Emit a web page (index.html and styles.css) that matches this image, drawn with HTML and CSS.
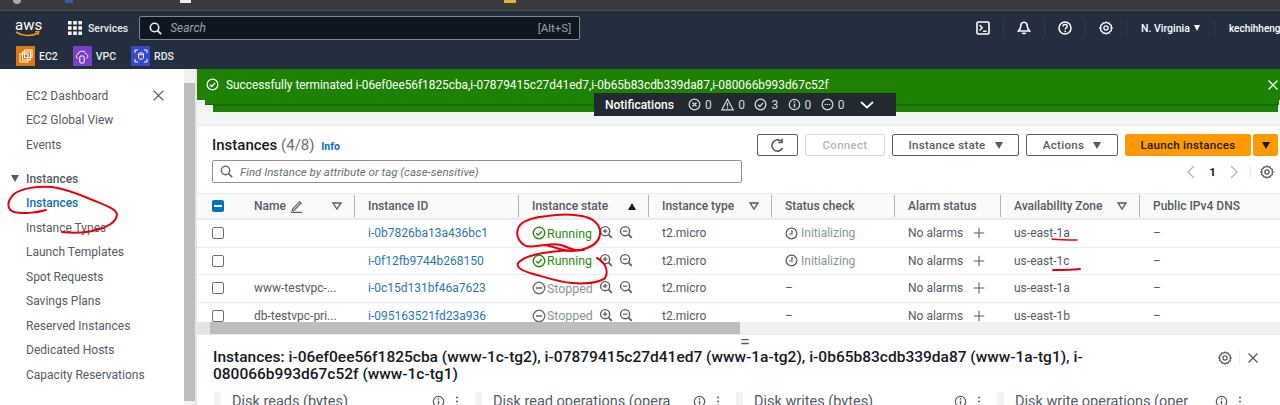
FILE: index.html
```html
<!DOCTYPE html>
<html lang="en">
<head>
    <meta charset="UTF-8">
    <meta name="viewport" content="width=device-width, initial-scale=1.0">
    <title>Instances | EC2</title>
    <link rel="stylesheet" href="styles.css">
</head>
<body>
    <svg class="defs" width="0" height="0">
        <symbol id="i-check" viewBox="0 0 16 16"><circle cx="8" cy="8" r="6.6" fill="none" stroke="currentColor" stroke-width="1.6"/><path d="M4.8 8.2l2.2 2.2 4.2-4.4" fill="none" stroke="currentColor" stroke-width="1.6"/></symbol>
        <symbol id="i-minus" viewBox="0 0 16 16"><circle cx="8" cy="8" r="6.6" fill="none" stroke="currentColor" stroke-width="1.6"/><path d="M4.5 8h7" stroke="currentColor" stroke-width="1.8"/></symbol>
        <symbol id="i-clock" viewBox="0 0 16 16"><circle cx="8" cy="8" r="6.6" fill="none" stroke="currentColor" stroke-width="1.5"/><path d="M8.6 3.8v4.8H5" fill="none" stroke="currentColor" stroke-width="1.5"/></symbol>
        <symbol id="i-zoom-in" viewBox="0 0 16 16"><circle cx="7" cy="7" r="5.2" fill="none" stroke="currentColor" stroke-width="1.6"/><path d="M11 11l3.6 3.6" stroke="currentColor" stroke-width="2"/><path d="M4.5 7h5M7 4.5v5" stroke="currentColor" stroke-width="1.4"/></symbol>
        <symbol id="i-zoom-out" viewBox="0 0 16 16"><circle cx="7" cy="7" r="5.2" fill="none" stroke="currentColor" stroke-width="1.6"/><path d="M11 11l3.6 3.6" stroke="currentColor" stroke-width="2"/><path d="M4.5 7h5" stroke="currentColor" stroke-width="1.4"/></symbol>
        <symbol id="i-gear" viewBox="0 0 16 16"><path d="M8 1.2l1.5 1.3 2-.2.8 1.8 1.8.9-.3 2L15 8l-1.2 1.2.3 1.9-1.8.9-.8 1.8-2-.2L8 14.8l-1.5-1.2-2 .2-.8-1.8-1.8-.9.3-1.9L1 8l1.2-1 -.3-2 1.8-.9.8-1.8 2 .2z" fill="none" stroke="currentColor" stroke-width="1.5"/><circle cx="8" cy="8" r="2.4" fill="none" stroke="currentColor" stroke-width="1.5"/></symbol>
        <symbol id="i-info" viewBox="0 0 16 16"><circle cx="8" cy="8" r="6.4" fill="none" stroke="currentColor" stroke-width="1.5"/><path d="M8 7v4.6" stroke="currentColor" stroke-width="1.8"/><circle cx="8" cy="4.8" r="1" fill="currentColor"/></symbol>
        <symbol id="i-x" viewBox="0 0 16 16"><path d="M2 2l12 12M14 2L2 14" stroke="currentColor" stroke-width="1.7"/></symbol>
        <symbol id="i-plus" viewBox="0 0 16 16"><path d="M8 1v14M1 8h14" stroke="currentColor" stroke-width="1.4"/></symbol>
        <symbol id="i-sort" viewBox="0 0 10 8"><path d="M1 1h8L5 7z" fill="none" stroke="currentColor" stroke-width="1.3"/></symbol>
        <symbol id="i-dots" viewBox="0 0 4 16"><circle cx="2" cy="3" r="1.2" fill="currentColor"/><circle cx="2" cy="8" r="1.2" fill="currentColor"/><circle cx="2" cy="13" r="1.2" fill="currentColor"/></symbol>
    </svg>

    <div class="browser-strip">
        <span class="strip-dot"></span><span class="strip-mark strip-blue"></span><span class="strip-mark strip-white"></span><span class="strip-mark strip-yellow"></span>
    </div>

    <header class="topbar">
        <div class="topbar-row">
            <div class="aws-logo">
                <span class="aws-word">aws</span>
                <svg width="25" height="6" viewBox="0 0 25 6"><path d="M1 1c6 4 15 5 22 1" fill="none" stroke="#f90" stroke-width="1.6"/><path d="M20 .8l4-.4-1 3.4" fill="none" stroke="#f90" stroke-width="1.2"/></svg>
            </div>
            <div class="services">
                <svg width="14" height="14" viewBox="0 0 14 14" fill="#fff"><path d="M0 0h3.6v3.6H0zM5.2 0h3.6v3.6H5.2zM10.4 0H14v3.6h-3.6zM0 5.2h3.6v3.6H0zM5.2 5.2h3.6v3.6H5.2zM10.4 5.2H14v3.6h-3.6zM0 10.4h3.6V14H0zM5.2 10.4h3.6V14H5.2zM10.4 10.4H14V14h-3.6z"/></svg>
                <span>Services</span>
            </div>
            <div class="global-search">
                <svg width="13" height="13" viewBox="0 0 16 16"><circle cx="6.8" cy="6.8" r="5.2" fill="none" stroke="#eaeded" stroke-width="2"/><path d="M10.6 10.6l4.4 4.4" stroke="#eaeded" stroke-width="2.2"/></svg>
                <em>Search</em>
                <span class="shortcut">[Alt+S]</span>
            </div>
            <div class="top-actions">
                <span class="top-icon">
                    <svg width="14" height="14" viewBox="0 0 14 14"><rect x="1" y="1" width="12" height="12" rx="1.2" fill="none" stroke="#fff" stroke-width="1.6"/><path d="M3.6 4l2.6 2.8-2.6 2.8M7 10.2h3.6" fill="none" stroke="#fff" stroke-width="1.4"/></svg>
                </span>
                <span class="top-icon">
                    <svg width="14" height="15" viewBox="0 0 14 15"><path d="M7 1.2c-2.4 0-3.2 2-3.2 3.8 0 2.2-1 3.4-2.4 5h11.2c-1.4-1.6-2.4-2.8-2.4-5C10.2 3.2 9.4 1.2 7 1.2z" fill="none" stroke="#fff" stroke-width="1.6"/><path d="M5.4 11.5a1.7 1.7 0 0 0 3.2 0" fill="none" stroke="#fff" stroke-width="1.5"/></svg>
                </span>
                <span class="top-icon">
                    <svg width="14" height="14" viewBox="0 0 14 14"><circle cx="7" cy="7" r="6" fill="none" stroke="#fff" stroke-width="1.5"/><path d="M5 5.4c0-2.6 4.2-2.6 4.2 0 0 1.5-2 1.5-2 3.2" fill="none" stroke="#fff" stroke-width="1.4"/><circle cx="7.2" cy="10.4" r=".9" fill="#fff"/></svg>
                </span>
                <span class="top-icon">
                    <svg width="14" height="14"><use href="#i-gear"/></svg>
                </span>
                <span class="region">N. Virginia <i class="caret"></i></span>
                <span class="account">kechihheng</span>
            </div>
        </div>
        <div class="shortcuts">
            <span class="shortcut-item">
                <span class="svc-icon svc-ec2"><svg width="14" height="14" viewBox="0 0 14 14" fill="none" stroke="#fff" stroke-width="1"><rect x="1" y="5" width="8" height="8"/><rect x="3.5" y="3" width="8" height="8"/><rect x="5.5" y="1" width="7.5" height="7.5"/></svg></span>EC2
            </span>
            <span class="shortcut-item">
                <span class="svc-icon svc-vpc"><svg width="14" height="15" viewBox="0 0 14 15" fill="none" stroke="#fff" stroke-width="1"><path d="M3 9.5C.8 9 .6 5.5 3.2 5c.3-3.5 6.6-4.2 7.6 0 2.6.4 2.7 4 .4 4.5"/><rect x="4.8" y="7" width="4.4" height="7" rx="1"/></svg></span>VPC
            </span>
            <span class="shortcut-item">
                <span class="svc-icon svc-rds"><svg width="14" height="14" viewBox="0 0 14 14" fill="none" stroke="#fff" stroke-width="1"><path d="M1 4V1h3M10 1h3v3M13 10v3h-3M4 13H1v-3"/><ellipse cx="7" cy="4.8" rx="2.4" ry="1"/><path d="M4.6 4.8v4.4c0 1.3 4.8 1.3 4.8 0V4.8"/></svg></span>RDS
            </span>
        </div>
    </header>

    <div class="main">
        <nav class="sidebar">
            <div class="nav-item nav-first">EC2 Dashboard <svg width="13" height="13"><use href="#i-x"/></svg></div>
            <div class="nav-item">EC2 Global View</div>
            <div class="nav-item">Events</div>
            <div class="nav-item nav-group"><i class="caret caret-dark"></i>Instances</div>
            <div class="nav-item nav-active">Instances</div>
            <div class="nav-item">Instance Types</div>
            <div class="nav-item">Launch Templates</div>
            <div class="nav-item">Spot Requests</div>
            <div class="nav-item">Savings Plans</div>
            <div class="nav-item">Reserved Instances</div>
            <div class="nav-item">Dedicated Hosts</div>
            <div class="nav-item">Capacity Reservations</div>
        </nav>
        <div class="side-scroll"><span class="side-thumb"></span></div>

        <section class="content">
            <div class="flash">
                <svg width="13" height="13"><use href="#i-check"/></svg>
                <span>Successfully terminated i-06ef0ee56f1825cba,i-07879415c27d41ed7,i-0b65b83cdb339da87,i-080066b993d67c52f</span>
                <svg class="flash-close" width="12" height="12"><use href="#i-x"/></svg>
            </div>
            <div class="flash-step"></div>
            <div class="flash-stack"></div>

            <div class="notifications">
                <strong>Notifications</strong>
                <span class="note"><svg width="13" height="13" viewBox="0 0 16 16"><circle cx="8" cy="8" r="6.6" fill="none" stroke="currentColor" stroke-width="1.5"/><path d="M5.5 5.5l5 5M10.5 5.5l-5 5" stroke="currentColor" stroke-width="1.5"/></svg>0</span>
                <span class="note"><svg width="13" height="13" viewBox="0 0 16 16"><path d="M8 1.5l7 13H1z" fill="none" stroke="currentColor" stroke-width="1.5"/><path d="M8 6v4.5M8 11.5V13" stroke="currentColor" stroke-width="1.5"/></svg>0</span>
                <span class="note"><svg width="13" height="13"><use href="#i-check"/></svg>3</span>
                <span class="note"><svg width="13" height="13"><use href="#i-info"/></svg>0</span>
                <span class="note"><svg width="13" height="13" viewBox="0 0 16 16"><circle cx="8" cy="8" r="6.6" fill="none" stroke="currentColor" stroke-width="1.5"/><path d="M4.5 8h7" stroke="currentColor" stroke-width="1.5" stroke-dasharray="1.8 .9"/></svg>0</span>
                <svg class="note-chevron" width="14" height="8" viewBox="0 0 14 8"><path d="M1 1l6 5.5L13 1" fill="none" stroke="#fff" stroke-width="1.7"/></svg>
            </div>

            <div class="panel">
                <div class="panel-head">
                    <h2>Instances <span class="count">(4/8)</span> <a class="info">Info</a></h2>
                    <div class="panel-actions">
                        <button class="btn btn-icon"><svg width="15" height="15" viewBox="0 0 16 16"><path d="M13.5 10.5A6 6 0 1 1 12 3.5" fill="none" stroke="#545b64" stroke-width="1.7"/><path d="M12.8 .8v4h-4" fill="none" stroke="#545b64" stroke-width="1.7"/></svg></button>
                        <button class="btn btn-connect" disabled>Connect</button>
                        <button class="btn btn-state">Instance state <i class="caret caret-dark"></i></button>
                        <button class="btn btn-actions">Actions <i class="caret caret-dark"></i></button>
                        <button class="btn btn-launch">Launch instances</button>
                        <button class="btn btn-launch-more"><i class="caret caret-black"></i></button>
                    </div>
                </div>

                <div class="filter-row">
                    <div class="filter">
                        <svg width="13" height="13" viewBox="0 0 16 16"><circle cx="6.8" cy="6.8" r="5.2" fill="none" stroke="#687078" stroke-width="1.8"/><path d="M10.6 10.6l4.4 4.4" stroke="#687078" stroke-width="2"/></svg>
                        <em>Find Instance by attribute or tag (case-sensitive)</em>
                    </div>
                    <div class="pager">
                        <svg width="9" height="14" viewBox="0 0 9 14"><path d="M8 1L2 7l6 6" fill="none" stroke="#aab7b8" stroke-width="1.3"/></svg>
                        <b>1</b>
                        <svg width="9" height="14" viewBox="0 0 9 14"><path d="M1 1l6 6-6 6" fill="none" stroke="#aab7b8" stroke-width="1.3"/></svg>
                        <span class="pager-gear"><svg width="14" height="14"><use href="#i-gear"/></svg></span>
                    </div>
                </div>

                <div class="table">
                    <div class="row row-head">
                        <div class="th th-check"><span class="check-mixed"></span></div>
                        <div class="th th-name">Name <svg class="pencil" width="13" height="13" viewBox="0 0 14 14"><path d="M3 9.5L10.5 2l1.5 1.5L4.5 11 2.5 11.5zM1 13.3h12" fill="none" stroke="#545b64" stroke-width="1.2"/></svg><svg class="sort" width="10" height="8"><use href="#i-sort"/></svg></div>
                        <div class="th">Instance ID</div>
                        <div class="th">Instance state <i class="sort-up"></i></div>
                        <div class="th">Instance type <svg class="sort" width="10" height="8"><use href="#i-sort"/></svg></div>
                        <div class="th">Status check</div>
                        <div class="th">Alarm status</div>
                        <div class="th">Availability Zone <svg class="sort" width="10" height="8"><use href="#i-sort"/></svg></div>
                        <div class="th">Public IPv4 DNS</div>
                    </div>

                    <div class="row">
                        <div class="td td-check"><span class="check"></span></div>
                        <div class="td td-name"></div>
                        <div class="td"><a class="link">i-0b7826ba13a436bc1</a></div>
                        <div class="td state"><span class="running"><svg width="14" height="14"><use href="#i-check"/></svg>Running</span><span class="zooms"><svg width="14" height="14"><use href="#i-zoom-in"/></svg><svg width="14" height="14"><use href="#i-zoom-out"/></svg></span></div>
                        <div class="td">t2.micro</div>
                        <div class="td muted"><svg width="13" height="13"><use href="#i-clock"/></svg>Initializing</div>
                        <div class="td">No alarms <svg class="plus" width="12" height="12"><use href="#i-plus"/></svg></div>
                        <div class="td">us-east-1a</div>
                        <div class="td">–</div>
                    </div>
                    <div class="row">
                        <div class="td td-check"><span class="check"></span></div>
                        <div class="td td-name"></div>
                        <div class="td"><a class="link">i-0f12fb9744b268150</a></div>
                        <div class="td state"><span class="running"><svg width="14" height="14"><use href="#i-check"/></svg>Running</span><span class="zooms"><svg width="14" height="14"><use href="#i-zoom-in"/></svg><svg width="14" height="14"><use href="#i-zoom-out"/></svg></span></div>
                        <div class="td">t2.micro</div>
                        <div class="td muted"><svg width="13" height="13"><use href="#i-clock"/></svg>Initializing</div>
                        <div class="td">No alarms <svg class="plus" width="12" height="12"><use href="#i-plus"/></svg></div>
                        <div class="td">us-east-1c</div>
                        <div class="td">–</div>
                    </div>
                    <div class="row">
                        <div class="td td-check"><span class="check"></span></div>
                        <div class="td td-name">www-testvpc-...</div>
                        <div class="td"><a class="link">i-0c15d131bf46a7623</a></div>
                        <div class="td state"><span class="stopped"><svg width="14" height="14"><use href="#i-minus"/></svg>Stopped</span><span class="zooms"><svg width="14" height="14"><use href="#i-zoom-in"/></svg><svg width="14" height="14"><use href="#i-zoom-out"/></svg></span></div>
                        <div class="td">t2.micro</div>
                        <div class="td">–</div>
                        <div class="td">No alarms <svg class="plus" width="12" height="12"><use href="#i-plus"/></svg></div>
                        <div class="td">us-east-1a</div>
                        <div class="td">–</div>
                    </div>
                    <div class="row">
                        <div class="td td-check"><span class="check"></span></div>
                        <div class="td td-name">db-testvpc-pri...</div>
                        <div class="td"><a class="link">i-095163521fd23a936</a></div>
                        <div class="td state"><span class="stopped"><svg width="14" height="14"><use href="#i-minus"/></svg>Stopped</span><span class="zooms"><svg width="14" height="14"><use href="#i-zoom-in"/></svg><svg width="14" height="14"><use href="#i-zoom-out"/></svg></span></div>
                        <div class="td">t2.micro</div>
                        <div class="td">–</div>
                        <div class="td">No alarms <svg class="plus" width="12" height="12"><use href="#i-plus"/></svg></div>
                        <div class="td">us-east-1b</div>
                        <div class="td">–</div>
                    </div>
                </div>

                <div class="table-scroll">
                    <span class="scroll-arrow"></span>
                    <span class="scroll-thumb"></span>
                </div>
            </div>

            <div class="details">
                <span class="splitter">=</span>
                <div class="details-head">
                    <h3>Instances: i-06ef0ee56f1825cba (www-1c-tg2), i-07879415c27d41ed7 (www-1a-tg2), i-0b65b83cdb339da87 (www-1a-tg1), i-080066b993d67c52f (www-1c-tg1)</h3>
                    <div class="details-tools">
                        <svg width="14" height="14"><use href="#i-gear"/></svg>
                        <span class="tool-sep"></span>
                        <svg width="12" height="12"><use href="#i-x"/></svg>
                    </div>
                </div>
                <div class="metrics">
                    <div class="metric"><span>Disk reads (bytes)</span><svg width="13" height="13"><use href="#i-info"/></svg><svg class="dots" width="4" height="13"><use href="#i-dots"/></svg></div>
                    <div class="metric"><span>Disk read operations (opera</span><svg width="13" height="13"><use href="#i-info"/></svg><svg class="dots" width="4" height="13"><use href="#i-dots"/></svg></div>
                    <div class="metric"><span>Disk writes (bytes)</span><svg width="13" height="13"><use href="#i-info"/></svg><svg class="dots" width="4" height="13"><use href="#i-dots"/></svg></div>
                    <div class="metric"><span>Disk write operations (oper</span><svg width="13" height="13"><use href="#i-info"/></svg><svg class="dots" width="4" height="13"><use href="#i-dots"/></svg></div>
                </div>
            </div>
        </section>
    </div>

    <!-- red marker scribbles on top of the screenshot -->
    <svg class="scribbles" width="1280" height="405" viewBox="0 0 1280 405">
        <g fill="none" stroke="#e8000d" stroke-width="2" stroke-linecap="round" stroke-linejoin="round">
            <path d="M46 210C36 213 22 214 14 212C6 209 7 201 14 194C22 188 38 186 52 187C66 189 76 193 90 199C102 204 115 208 117 214C117 222 106 228 96 230C86 233 72 233 62 232"/>
            <path d="M545 245C535 246 528 248 524 245C517 240 515 232 520 225C526 219 535 217 547 216C560 214 572 214 582 216C592 218 598 222 600 230C601 239 595 245 587 248C580 251 572 252 564 250C556 248 550 246 545 245"/>
            <path d="M545 245C552 244 560 244 564 246C568 248 571 249 575 250"/>
            <path d="M584 250C570 250 555 251 543 253C532 255 523 258 519 262C515 266 520 270 530 273C545 277 558 282 572 283C584 284 596 283 604 279C608 275 607 268 604 264C602 261 599 259 597 258"/>
            <path d="M1052 239C1060 240 1068 240 1077 240" stroke-width="1.5"/>
            <path d="M1053 270C1062 270 1071 270 1080 269"/>
        </g>
    </svg>
</body>
</html>
```

FILE: styles.css
```css
* {
    font-family: "Roboto", "Liberation Sans", sans-serif;
    padding: 0;
    margin: 0;
    box-sizing: border-box;
}

body {
    position: relative;
    height: 405px;
    overflow: hidden;
    background-color: #fff;
    color: #545b64;
    font-size: 12px;
}

.defs {
    position: absolute;
}

svg {
    flex: none;
}

.caret {
    display: inline-block;
    width: 0;
    height: 0;
    border-left: 4px solid transparent;
    border-right: 4px solid transparent;
    border-top: 7px solid #fff;
}

.caret-dark {
    border-top-color: #545b64;
}

.caret-black {
    border-top-color: #16191f;
}

/* browser chrome cut off at the top */
.browser-strip {
    position: relative;
    height: 11px;
    background-color: #3b3b3b;
    border-bottom: 1px solid #4b4f55;
}

.strip-dot {
    position: absolute;
    left: 13px;
    top: 0;
    width: 8px;
    height: 4px;
    border-radius: 0 0 4px 4px;
    background-color: #aaa;
}

.strip-mark {
    position: absolute;
    top: 0;
    height: 3px;
}

.strip-blue {
    left: 65px;
    width: 8px;
    background-color: #2f5fa8;
}

.strip-white {
    left: 180px;
    width: 11px;
    background-color: #eee;
}

.strip-yellow {
    left: 504px;
    width: 12px;
    background-color: #e8b030;
}

/* top navigation */
.topbar {
    height: 58px;
    background-color: #232f3e;
    color: #eaeded;
}

.topbar-row {
    display: flex;
    align-items: center;
    height: 33px;
    padding: 1px 0 0 15px;
}

.aws-logo {
    display: flex;
    flex-direction: column;
    width: 25px;
    color: #fff;
}

.aws-word {
    font-size: 15px;
    line-height: 12px;
    text-align: center;
}

.services {
    display: flex;
    align-items: center;
    gap: 6px;
    margin-left: 28px;
    font-size: 10.5px;
    font-weight: 500;
}

.global-search {
    display: flex;
    align-items: center;
    width: 441px;
    height: 24px;
    margin-left: 11px;
    padding: 0 8px 0 9px;
    background-color: #10161f;
    border: 1px solid #7d8998;
    border-radius: 2px;
    color: #95a5a6;
}

.global-search em {
    margin-left: 8px;
    font-size: 12px;
}

.shortcut {
    margin-left: auto;
    font-size: 11.5px;
}

.top-actions {
    display: flex;
    align-items: center;
    margin-left: auto;
    color: #fff;
    font-size: 10.5px;
    font-weight: 500;
    white-space: nowrap;
}

.top-icon {
    display: flex;
    justify-content: center;
    width: 41px;
    border-right: 1px solid #2f3d4e;
}

.region {
    display: flex;
    align-items: center;
    gap: 4px;
    width: 88px;
    padding-left: 14px;
    border-right: 1px solid #2f3d4e;
}

.region .caret {
    border-left-width: 3.5px;
    border-right-width: 3.5px;
    border-top-width: 6px;
}

.account {
    width: 65px;
    padding-left: 14px;
    font-size: 10px;
    overflow: hidden;
}

.shortcuts {
    display: flex;
    align-items: center;
    gap: 15px;
    padding: 2px 0 0 16px;
    font-size: 10.5px;
    font-weight: 500;
}

.shortcut-item {
    display: flex;
    align-items: center;
    gap: 4px;
}

.svc-icon {
    display: flex;
    align-items: center;
    justify-content: center;
    width: 19px;
    height: 20px;
}

.svc-ec2 {
    background-color: #e0760f;
}

.svc-vpc {
    background-color: #7a3fc4;
}

.svc-rds {
    background-color: #3b48cc;
}

/* layout under the header */
.main {
    display: flex;
    height: 336px;
}

.sidebar {
    width: 184px;
    padding-top: 14.5px;
    background-color: #fff;
}

.nav-item {
    display: flex;
    align-items: center;
    height: 24.5px;
    padding-left: 26px;
    white-space: nowrap;
}

.nav-first {
    justify-content: space-between;
    padding-right: 19px;
}

.nav-first svg {
    width: 13px;
    color: #545b64;
}

.nav-group {
    gap: 7px;
    margin-top: 9.6px;
    padding-left: 11px;
    font-weight: 500;
    color: #545b64;
}

.nav-active {
    color: #0f6fb0;
    font-weight: 500;
}

.side-scroll {
    width: 13px;
    padding-top: 14px;
    background-color: #f1f1f1;
    border-right: 2px solid #e4e6e6;
}

.side-thumb {
    display: block;
    width: 11px;
    height: 318px;
    background-color: #bdbdbd;
}

.content {
    position: relative;
    flex: 1;
    min-width: 0;
    background-color: #f4f5f5;
}

/* success banner */
.flash {
    display: flex;
    align-items: center;
    gap: 7px;
    height: 31px;
    padding: 0 0 0 9px;
    background-color: #1d8102;
    color: #fff;
    font-size: 11.85px;
}

.flash-close {
    margin-left: auto;
    margin-right: 1px;
}

.flash-step {
    height: 5px;
    margin: 0 1px 0 8px;
    background-color: #1d8102;
    border-bottom: 1px solid #176b02;
}

.flash-stack {
    height: 7px;
    margin: 0 2px 13px 16px;
    background-color: #1d8102;
    border-top: 1px solid #176b02;
}

.notifications {
    position: absolute;
    left: 397px;
    top: 24px;
    display: flex;
    align-items: center;
    width: 302px;
    height: 23px;
    padding-left: 11px;
    background-color: #232930;
    color: #d5dbdb;
    font-size: 12px;
}

.notifications strong {
    width: 83px;
    color: #fff;
    font-weight: 500;
}

.note {
    display: flex;
    align-items: center;
    gap: 4px;
    width: 33.2px;
}

.note-chevron {
    margin-left: 6px;
}

/* instances panel */
.panel {
    height: 209px;
    padding-top: 8px;
    background-color: #fff;
    border-top: 1px solid #eaeded;
}

.panel-head {
    display: flex;
    align-items: center;
    height: 22px;
    padding: 0 2px 0 15px;
}

.panel-head h2 {
    color: #16191f;
    font-size: 15px;
    font-weight: 500;
}

.count {
    color: #687078;
    font-weight: 400;
}

.info {
    margin-left: 3px;
    color: #0073bb;
    font-size: 10.5px;
    font-weight: 700;
}

.panel-actions {
    display: flex;
    gap: 7px;
    margin-left: auto;
}

.btn {
    display: flex;
    align-items: center;
    justify-content: center;
    gap: 9px;
    height: 22px;
    background-color: #fff;
    border: 1px solid #545b64;
    border-radius: 2px;
    color: #545b64;
    font-size: 11.5px;
    font-weight: 500;
    letter-spacing: .3px;
}

.btn-icon {
    width: 41px;
}

.btn-connect {
    width: 80px;
    border-color: #d5dbdb;
    color: #aab7b8;
}

.btn-state {
    width: 127px;
}

.btn-actions {
    width: 92px;
}

.btn-launch {
    width: 126px;
    background-color: #f90;
    border-color: #f90;
    color: #16191f;
}

.btn-launch-more {
    width: 25px;
    margin-left: -5px;
    background-color: #f90;
    border-color: #f90;
}

.filter-row {
    display: flex;
    align-items: center;
    margin-top: 4px;
    padding-left: 15px;
}

.filter {
    display: flex;
    align-items: center;
    gap: 7px;
    width: 530px;
    height: 23px;
    padding-left: 7px;
    border: 1px solid #879596;
    border-radius: 2px;
    color: #687078;
    font-size: 11.5px;
}

.pager {
    display: flex;
    align-items: center;
    margin-left: auto;
    padding-right: 6px;
    color: #16191f;
    font-size: 11.5px;
}

.pager b {
    width: 35px;
    font-weight: 700;
    text-align: center;
}

.pager-gear {
    display: flex;
    margin-left: 11px;
    padding-left: 9px;
    border-left: 1px solid #eaeded;
    color: #545b64;
}

/* table */
.table {
    height: 129px;
    margin-top: 10px;
    overflow: hidden;
}

.row {
    display: grid;
    grid-template-columns: 57px 100px 164px 130px 123px 123px 106px 139px 141px;
    height: 27.5px;
    border-bottom: 1px solid #eaeded;
    white-space: nowrap;
}

.row-head {
    align-items: center;
    height: 27px;
    background-color: #fafafa;
    border-top: 1px solid #eaeded;
    border-bottom: 2px solid #eaeded;
    color: #545b64;
    font-weight: 500;
}

.th {
    display: flex;
    align-items: center;
    height: 22px;
    padding: 0 12px 0 13px;
    border-left: 1px solid #aab7b8;
}

.th-check {
    padding: 0 0 0 15px;
    border-left: 0;
}

.th-name {
    gap: 3px;
    padding: 0 12px 0 0;
    border-left: 0;
}

.pencil {
    margin-left: 1px;
}

.sort {
    margin-left: auto;
    color: #545b64;
}

.sort-up {
    margin-left: auto;
    border-left: 4.5px solid transparent;
    border-right: 4.5px solid transparent;
    border-bottom: 7px solid #16191f;
}

.td {
    display: flex;
    align-items: center;
    padding-left: 14px;
}

.td-check {
    padding-left: 15px;
}

.td-name {
    padding-left: 0;
}

.check {
    width: 12px;
    height: 12px;
    background-color: #fff;
    border: 1px solid #687078;
    border-radius: 2px;
}

.check-mixed {
    position: relative;
    width: 12px;
    height: 12px;
    background-color: #0073bb;
    border-radius: 2px;
}

.check-mixed::after {
    content: "";
    position: absolute;
    left: 2px;
    top: 5px;
    width: 8px;
    height: 2px;
    background-color: #fff;
}

.link {
    color: #2677b3;
}

.state {
    gap: 6px;
}

.running,
.stopped {
    display: flex;
    align-items: center;
    gap: 1px;
    width: 61px;
    font-size: 12.4px;
}

.running {
    color: #2b8a14;
}

.stopped {
    color: #879596;
}

.stopped svg {
    color: #687078;
}

.zooms {
    display: flex;
    gap: 6px;
    margin-top: -2px;
    color: #545b64;
}

.muted {
    gap: 3px;
    color: #879596;
}

.muted svg {
    color: #545b64;
}

.plus {
    margin-left: 10px;
    color: #545b64;
}

.table-scroll {
    display: flex;
    height: 12px;
    background-color: #f1f1f1;
}

.scroll-arrow {
    width: 13px;
    background-color: #e4e4e4;
}

.scroll-thumb {
    width: 530px;
    background-color: #bdbdbd;
}

/* bottom split panel */
.details {
    position: relative;
    height: 71px;
    padding-top: 14px;
    background-color: #fff;
    border-top: 1px solid #eaeded;
}

.splitter {
    position: absolute;
    left: 543px;
    top: 1px;
    color: #545b64;
    font-size: 18px;
    line-height: 12px;
}

.details-head {
    display: flex;
    padding: 0 21px 0 16px;
}

.details-head h3 {
    width: 880px;
    color: #16191f;
    font-size: 15.5px;
    font-weight: 500;
    line-height: 17px;
}

.details-tools {
    display: flex;
    align-items: center;
    gap: 7px;
    align-self: flex-start;
    height: 17px;
    margin-left: auto;
    color: #545b64;
}

.tool-sep {
    width: 1px;
    height: 15px;
    background-color: #eaeded;
}

.metrics {
    display: grid;
    grid-template-columns: repeat(4, 261px);
    margin-top: 9px;
    padding-left: 17px;
}

.metric {
    display: flex;
    align-items: center;
    height: 18px;
    padding: 0 11px;
    border-left: 7px solid #f2f3f3;
    color: #545b64;
    font-size: 14.5px;
    white-space: nowrap;
}

.metric span {
    width: 200px;
    overflow: hidden;
}

.dots {
    margin-left: 10px;
}

.scribbles {
    position: absolute;
    left: 0;
    top: 0;
    pointer-events: none;
}
```
